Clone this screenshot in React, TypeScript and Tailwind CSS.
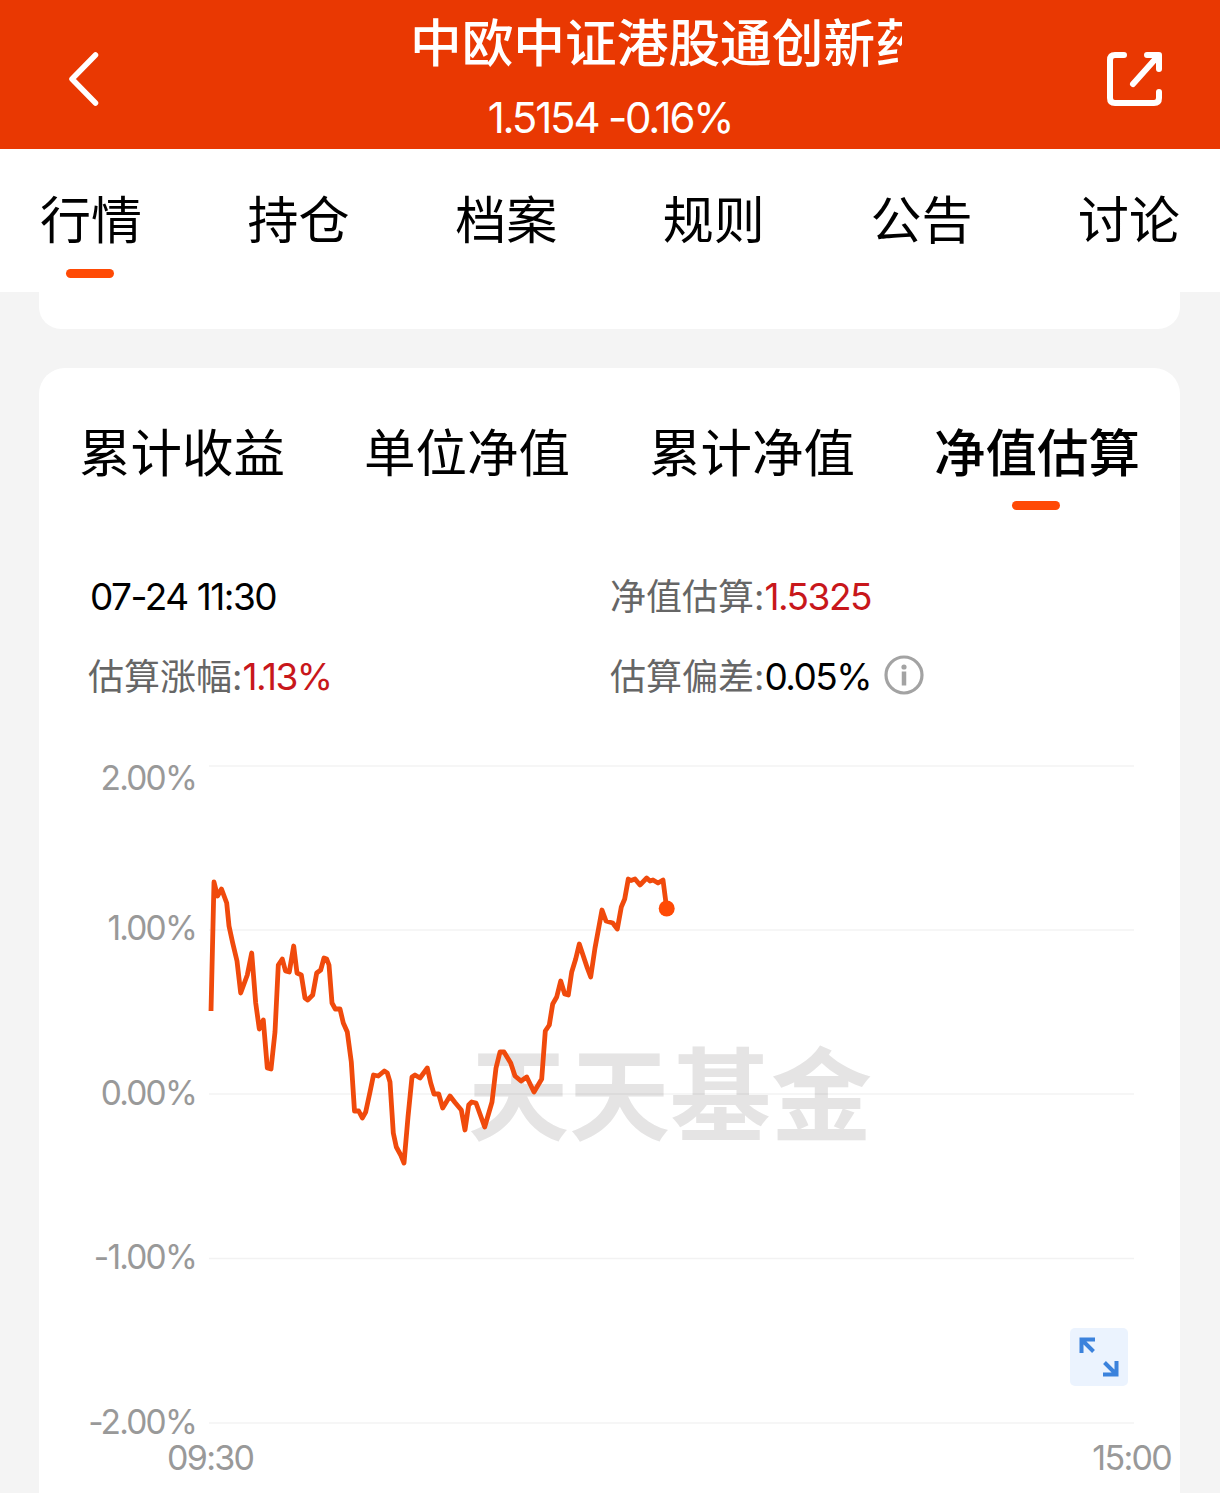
import { useState } from 'react';
import clsx from 'clsx';

const pageTabs = ['行情', '持仓', '档案', '规则', '公告', '讨论'];
const chartTabs = ['累计收益', '单位净值', '累计净值', '净值估算'];
const yLabels = ['2.00%', '1.00%', '0.00%', '-1.00%', '-2.00%'];
const gridLines = [766, 930, 1094, 1258.5, 1423];

// intraday estimate, in chart units
const points: [number, number][] = [
  [211, 1011], [214, 882], [217.5, 896], [221.5, 889], [226.7, 903], [229, 926], [232.7, 943], [237, 961],
  [240.7, 993], [247.3, 975], [251.7, 953], [255.7, 1003], [259.3, 1029], [263.3, 1020], [267.3, 1068], [271, 1069],
  [275, 1032], [278.3, 965], [282.3, 959], [285.5, 971], [289.3, 972], [293.7, 946], [297, 973], [301.3, 975],
  [305, 998], [307.7, 1000], [312.7, 995], [316.7, 973], [320.7, 970], [324, 958], [326.7, 959], [329, 965],
  [332, 1003], [335.3, 1009], [340, 1009], [343.3, 1023], [347.3, 1032], [351.3, 1062], [354.5, 1111], [358.7, 1111],
  [362.3, 1118], [365.7, 1112], [370, 1092], [373.5, 1075], [378.3, 1076], [384.3, 1071], [387.3, 1073], [390, 1082],
  [393.3, 1133], [396.3, 1147], [400.7, 1155], [404, 1163], [408, 1117], [412, 1077], [415, 1075], [420, 1078],
  [427.3, 1068], [430.7, 1083], [434, 1094], [438.7, 1094], [442.7, 1108], [450, 1096], [455, 1102.5], [461.3, 1110],
  [465, 1130], [468.7, 1105], [471.7, 1102], [476, 1103], [484.7, 1127], [492, 1102], [496, 1068], [500, 1052],
  [504, 1052], [510.7, 1063], [515, 1076], [521, 1081], [526.7, 1077], [534, 1092], [541.7, 1079], [545.3, 1031],
  [549.3, 1025], [552.7, 1004], [556.7, 997], [560.7, 981], [564.7, 994], [568.3, 995], [571.7, 972], [575.7, 959],
  [579.3, 944], [587.3, 968], [590.7, 977], [595, 948], [602, 910], [606, 921], [612.7, 923], [617.3, 929],
  [621.3, 907], [624.7, 899], [628.3, 879], [631, 880.5], [635, 879], [640, 885], [646.7, 878], [650, 881],
  [653, 880], [658, 883], [663, 880], [666.7, 908.5],
];

const linePoints = points.map(([x, y]) => `${x},${y}`).join(' ');
const [lastX, lastY] = points[points.length - 1];

function Header() {
  return (
    <header className="flex h-[149px] items-center justify-between bg-[#e93802] text-white">
      <button className="ml-[60px] h-[60px] w-[60px]" aria-label="返回">
        <svg viewBox="0 0 60 60" className="mt-[4px]" fill="none" stroke="currentColor" strokeWidth="5.5" strokeLinecap="round" strokeLinejoin="round">
          <path d="M35.500 6 12 30 35.500 54" />
        </svg>
      </button>
      <div className="mr-[5px] h-full w-[584px]">
        <h1 className="mt-[5px] h-[76px] overflow-hidden pl-[92px] text-[51.700px] leading-[76px] font-medium whitespace-nowrap">
          中欧中证港股通创新药
        </h1>
        <p className="mt-[14px] text-center text-[42px] leading-[46px] tracking-[-2.200px]">1.5154 -0.16%</p>
      </div>
      <button className="mr-[55px] h-[60px] w-[60px]" aria-label="分享">
        <svg viewBox="0 0 60 60" className="mt-[4px]" fill="none" stroke="currentColor" strokeWidth="6" strokeLinecap="round" strokeLinejoin="round">
          <path d="M19 6H10Q5 6 5 11V49Q5 54 10 54H49Q54 54 54 49V43" />
          <path d="M28 35 53 7M42 6H54V20" />
        </svg>
      </button>
    </header>
  );
}

function Underline() {
  return <span className="block h-[9px] w-[48px] rounded-full bg-[#ff4a05]" />;
}

function InfoIcon() {
  return (
    <svg viewBox="0 0 40 40" className="-mt-[5px] ml-[13px] h-[40px] w-[40px]" fill="none" stroke="#a3a3a3">
      <circle cx="20" cy="20" r="18" strokeWidth="3.200" />
      <circle cx="20" cy="12" r="2.600" fill="#a3a3a3" stroke="none" />
      <path d="M20 16.500V30.500" strokeWidth="4.500" />
    </svg>
  );
}

function EstimateInfo() {
  return (
    <div className="mt-[47px] grid grid-cols-[521px_1fr] pl-[50px] text-[36px] text-[#666]">
      <div className="flex h-[80px] items-center pl-[1px]">
        <span className="text-[37px] tracking-[-1.500px] text-black">07-24 11:30</span>
      </div>
      <div className="flex h-[80px] items-center">
        <span>净值估算:</span>
        <span className="text-[37px] tracking-[-1.500px] text-[#c8171b]">1.5325</span>
      </div>
      <div className="-ml-[1px] flex h-[80px] items-center">
        <span>估算涨幅:</span>
        <span className="text-[37px] tracking-[-1.500px] text-[#c8171b]">1.13%</span>
      </div>
      <div className="flex h-[80px] items-center">
        <span>估算偏差:</span>
        <span className="text-[37px] tracking-[-1.500px] text-black">0.05%</span>
        <InfoIcon />
      </div>
    </div>
  );
}

function Chart() {
  return (
    <div className="relative mt-[41px] h-[735px]">
      <div className="absolute top-[278px] left-[429px] text-[101px] leading-[120px] font-bold whitespace-nowrap text-[#e5e4e4]">
        天天基金
      </div>
      <div className="relative flex">
        <div className="flex w-[157px] flex-col text-right text-[33.500px] leading-[40px] tracking-[-1.800px] text-[#999]">
          {yLabels.map((label, index) => (
            <span
              key={label}
              className={clsx(index === 0 && 'h-[150px]', index > 0 && index < 4 && 'h-[164.500px]', index === 4 && 'h-[36px]')}
            >
              {label}
            </span>
          ))}
        </div>
        <svg viewBox="196 758 984 680" className="h-[680px] w-[984px]" fill="none">
          {gridLines.map((y) => (
            <path key={y} d={`M209 ${y}H1134`} stroke="#000" strokeOpacity="0.05" strokeWidth="1.500" />
          ))}
          <polyline points={linePoints} stroke="#f04a0c" strokeWidth="4.800" strokeLinejoin="round" />
          <circle cx={lastX} cy={lastY} r="8" fill="#ff4a05" />
        </svg>
      </div>
      <div className="relative -mt-[2px] flex justify-between pr-[9px] pl-[128px] text-[34px] leading-[44px] tracking-[-1.700px] text-[#999]">
        <span>09:30</span>
        <span>15:00</span>
      </div>
      <button className="absolute top-[570px] right-[52px] h-[58px] w-[58px] rounded-[5px] bg-[#ebf3fe]" aria-label="全屏">
        <svg viewBox="0 0 58 58" fill="none" stroke="#3b82dc" strokeWidth="4">
          <path d="M11.500 25V11.500H25M12 12 23.500 23.500" />
          <path d="M33 46.500H46.500V33M46 46 34.500 34.500" />
        </svg>
      </button>
    </div>
  );
}

export default function App() {
  const [pageTab, setPageTab] = useState('行情');
  const [chartTab, setChartTab] = useState('净值估算');

  return (
    <div className="h-[1493px] w-[1220px] overflow-hidden bg-[#f4f4f4] font-[Inter,'Noto_Sans_CJK_SC',sans-serif] text-black">
      <Header />

      <nav className="flex h-[143px] justify-between bg-white px-[40px] pt-[34px]">
        {pageTabs.map((tab) => (
          <button
            key={tab}
            onClick={() => setPageTab(tab)}
            className="flex flex-col items-center text-[51px] leading-[76px]"
          >
            {tab}
            <span className="mt-[10px] -ml-[2px]">{tab === pageTab && <Underline />}</span>
          </button>
        ))}
      </nav>

      <div className="mr-[40px] ml-[39px] h-[37px] rounded-b-[22px] bg-white" />

      <section className="mt-[39px] mr-[40px] ml-[39px] h-[1125px] rounded-t-[26px] bg-white">
        <div className="flex justify-between px-[40px] pt-[47px]">
          {chartTabs.map((tab) => (
            <button
              key={tab}
              onClick={() => setChartTab(tab)}
              className={clsx(
                'flex h-[95px] flex-col items-center text-[51.500px] leading-[76px]',
                tab === chartTab && 'font-medium'
              )}
            >
              {tab}
              {tab === chartTab && (
                <span className="mt-[10px] -ml-[2px]">
                  <Underline />
                </span>
              )}
            </button>
          ))}
        </div>
        <EstimateInfo />
        <Chart />
      </section>
    </div>
  );
}
